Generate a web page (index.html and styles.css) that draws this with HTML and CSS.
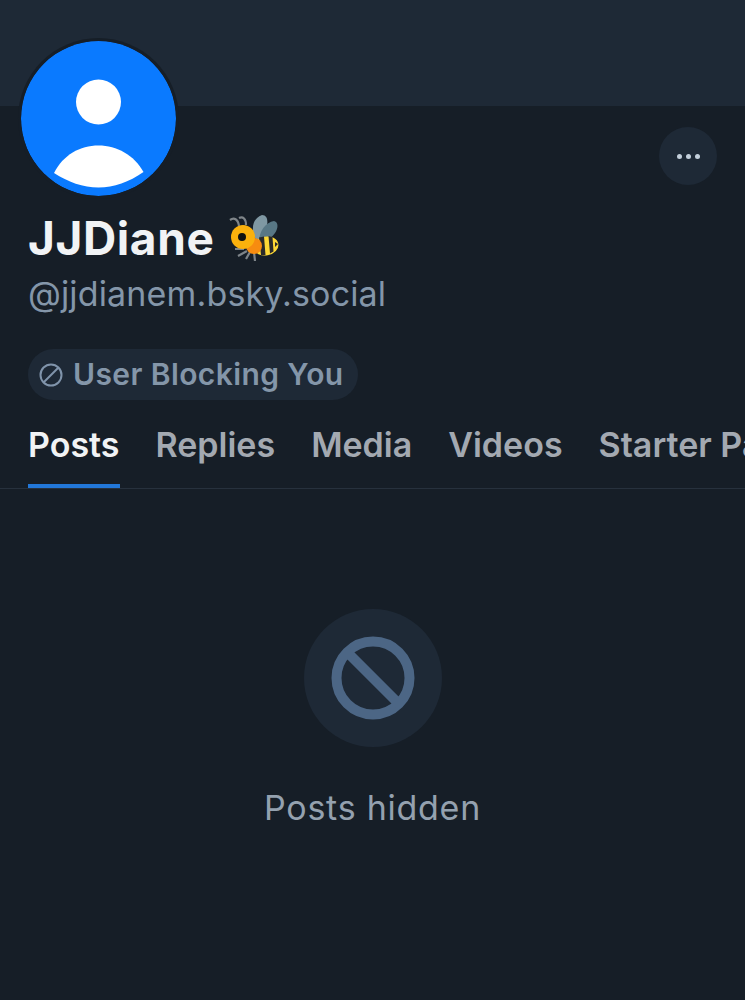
FILE: index.html
```html
<!DOCTYPE html>
<html lang="en">
<head>
    <meta charset="UTF-8">
    <meta name="viewport" content="width=device-width, initial-scale=1.0">
    <title>JJDiane</title>
    <link rel="stylesheet" href="styles.css">
</head>
<body>
    <div class="banner"></div>

    <!-- Avatar overlaps the banner -->
    <svg class="avatar" viewBox="0 0 155 155">
        <circle cx="77.5" cy="77.5" r="77.5" fill="#0a7aff"/>
        <circle cx="77.5" cy="61" r="22.5" fill="#fff"/>
        <path d="M33 132 C42 114 59 104.500 77.500 104.500 C96 104.500 113 114 122.500 131 C108 141 93 146.500 77.500 146.500 C62 146.500 47 141 33 132 Z" fill="#fff"/>
    </svg>

    <div class="profile">
        <div class="actions">
            <button class="more-btn">
                <span class="dot"></span><span class="dot"></span><span class="dot"></span>
            </button>
        </div>
        <h1 class="name">JJDiane
            <svg class="bee" viewBox="0 0 50 48">
                <path d="M27 26 C21 15 24 4 33 1 C38 1 39 6 38 12 C37 18 34 23 30 27 Z" fill="#7f98a3"/>
                <path d="M30 28 C30 17 37 8 45 7 C50 8 49 15 46 19 C42 25 36 28 30 28 Z" fill="#587785"/>
                <path d="M1 6 C5 3 9 5 10 12 M10 4 C14 2 17 5 17 11" fill="none" stroke="#7f8589" stroke-width="2.200"/>
                <path d="M15 35 L6 35 M18 37 L9 42 M21 38 L17 45 M25 38 L26 47" stroke="#7d8489" stroke-width="2.200" fill="none"/>
                <ellipse cx="37" cy="32" rx="12.500" ry="9.500" fill="#fdd835" transform="rotate(-10 37 32)"/>
                <path d="M30 23.500 L32 41 L36.500 41 L35 22.500 Z M39.500 22 L41 39.500 L44.500 37.500 L43.500 23 Z" fill="#2a2a2a"/>
                <path d="M49 30 L46 33 L46 28 Z" fill="#2a2a2a"/>
                <circle cx="25" cy="32" r="8" fill="#f78c10"/>
                <circle cx="14" cy="23" r="12" fill="#fbb10d"/>
                <circle cx="13" cy="23" r="4" fill="#111"/>
            </svg>
        </h1>
        <div class="handle">@jjdianem.bsky.social</div>
        <div class="badge">
            <svg class="badge-icon" viewBox="0 0 24 24">
                <circle cx="12" cy="12" r="10.500" fill="none" stroke="#8094ab" stroke-width="2"/>
                <path d="M19.500 4.500 L4.500 19.500" stroke="#8094ab" stroke-width="2"/>
            </svg>
            <span>User Blocking You</span>
        </div>
    </div>

    <div class="tabs">
        <div class="tab active">Posts</div>
        <div class="tab">Replies</div>
        <div class="tab">Media</div>
        <div class="tab">Videos</div>
        <div class="tab">Starter Packs</div>
    </div>

    <div class="empty">
        <div class="empty-circle">
            <svg class="empty-icon" viewBox="0 0 84 84">
                <circle cx="42" cy="42" r="36.500" fill="none" stroke="#4c6685" stroke-width="10"/>
                <path d="M16 16 L68 68" stroke="#4c6685" stroke-width="10"/>
            </svg>
        </div>
        <div class="empty-text">Posts hidden</div>
    </div>
</body>
</html>
```

FILE: styles.css
```css
* {
    margin: 0;
    padding: 0;
    box-sizing: border-box;
}

body {
    font-family: Inter, "Liberation Sans", sans-serif;
    background-color: #161e27;
    color: #f1f3f5;
    overflow: hidden;
    height: 1000px;
}

.banner {
    height: 106px;
    background-color: #1e2936;
}

.avatar {
    position: absolute;
    left: 21px;
    top: 41px;
    width: 155px;
    height: 155px;
    border-radius: 50%;
    box-shadow: 0 0 0 3px #161e27;
}

.profile {
    padding: 21px 28px 0;
}

.actions {
    display: flex;
    justify-content: flex-end;
}

.more-btn {
    width: 58px;
    height: 58px;
    border: none;
    border-radius: 50%;
    background-color: #1e2936;
    display: flex;
    align-items: center;
    justify-content: center;
    gap: 4px;
}

.dot {
    width: 5px;
    height: 5px;
    border-radius: 50%;
    background-color: #c3cfdb;
}

.name {
    display: flex;
    align-items: center;
    gap: 15px;
    font-size: 46px;
    font-weight: 700;
    letter-spacing: 0.6px;
    line-height: 50px;
    margin-top: 28px;
}

.bee {
    width: 50px;
    height: 48px;
}

.handle {
    font-size: 34px;
    letter-spacing: 0.15px;
    line-height: 40px;
    color: #8496a9;
    margin-top: 11px;
}

.badge {
    display: inline-flex;
    align-items: center;
    gap: 10px;
    height: 51px;
    margin-top: 35px;
    padding: 0 14px 2px 11px;
    border-radius: 26px;
    background-color: #1e2936;
    color: #8496a9;
    font-size: 30px;
    letter-spacing: 0.4px;
    font-weight: 600;
}

.badge-icon {
    width: 24px;
    height: 24px;
    margin-top: 2px;
}

.tabs {
    display: flex;
    gap: 36px;
    height: 89px;
    padding-left: 28px;
    border-bottom: 1px solid #27313d;
    white-space: nowrap;
    overflow: hidden;
}

.tab {
    font-size: 34px;
    font-weight: 600;
    color: #a3a9b1;
    padding-top: 24px;
    height: 88px;
}

.tab.active {
    color: #f1f3f5;
    border-bottom: 4px solid #2277d8;
    padding-right: 1px;
    margin-right: -1px;
}

.empty {
    display: flex;
    flex-direction: column;
    align-items: center;
    padding-top: 120px;
}

.empty-circle {
    width: 138px;
    height: 138px;
    border-radius: 50%;
    background-color: #1e2936;
    display: flex;
    align-items: center;
    justify-content: center;
}

.empty-icon {
    width: 84px;
    height: 84px;
}

.empty-text {
    font-size: 34px;
    letter-spacing: 0.75px;
    line-height: 40px;
    color: #94a1af;
    margin-top: 41px;
}
```
